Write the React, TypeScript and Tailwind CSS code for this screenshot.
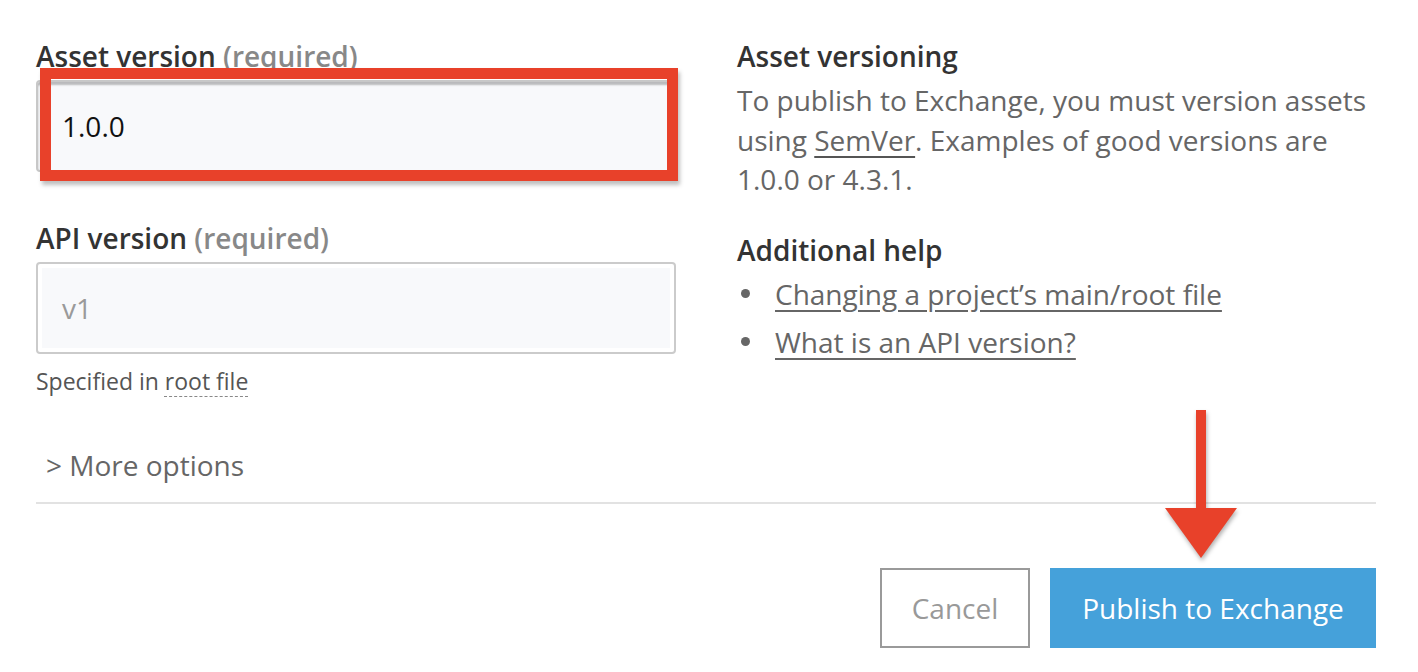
import React from "react";

export default function App() {
  return (
    <div
      className="w-[1418px] h-[672px] bg-white overflow-hidden relative"
      style={{ fontFamily: '"Open Sans", "Noto Sans", sans-serif' }}
    >
      <div className="pl-[36px] pr-[42px] pt-[38px]">
        <div className="flex">
          {/* Left column */}
          <div className="w-[640px] shrink-0">
            <div className="text-[28px] leading-[36px] font-semibold text-[#333]">
              Asset version <span className="text-[#888]">(required)</span>
            </div>
            <div className="relative mt-[6px]">
              <div className="h-[92px] rounded-[4px] border-2 border-[#c8c8c8] bg-[#f8f9fb] shadow-[inset_0_3px_2px_rgba(0,0,0,0.25)] flex items-center pl-[24px]">
                <span className="text-[28px] text-[#111]">1.0.0</span>
              </div>
              <div className="absolute left-[4px] top-[-12px] w-[638px] h-[113px] border-[11px] border-[#e8412a] shadow-[2px_4px_4px_rgba(0,0,0,0.25)]" />
            </div>

            <div className="mt-[48px] text-[28px] leading-[36px] font-semibold text-[#333]">
              API version <span className="text-[#888]">(required)</span>
            </div>
            <div className="mt-[6px] h-[92px] rounded-[4px] border-2 border-[#cbcbcb] bg-white p-[4px]">
              <div className="h-full bg-[#f8f9fb] flex items-center pl-[20px]">
                <span className="text-[28px] text-[#9a9a9a]">v1</span>
              </div>
            </div>
            <div className="mt-[12px] text-[23px] leading-[30px] text-[#555]">
              Specified in{" "}
              <span className="underline decoration-dashed decoration-[#888] underline-offset-[6px] decoration-1">
                root file
              </span>
            </div>
          </div>

          {/* Right column */}
          <div className="ml-[61px] flex-1">
            <div className="text-[28px] leading-[36px] font-semibold text-[#333]">
              Asset versioning
            </div>
            <p className="mt-[7px] text-[28px] leading-[39.5px] text-[#666]">
              To publish to Exchange, you must version assets using{" "}
              <span className="underline underline-offset-[5px] decoration-[#555]">SemVer</span>. Examples of good versions are 1.0.0 or 4.3.1.
            </p>
            <div className="mt-[32px] text-[28px] leading-[36px] font-semibold text-[#333]">
              Additional help
            </div>
            <ul className="mt-[2px] text-[28px] leading-[48px] text-[#666]">
              <li className="flex items-center">
                <span className="w-[9px] h-[9px] rounded-full bg-[#666] ml-[4px] mr-[25px]" />
                <span className="underline underline-offset-[5px] decoration-[#666]">
                  Changing a project’s main/root file
                </span>
              </li>
              <li className="flex items-center">
                <span className="w-[9px] h-[9px] rounded-full bg-[#666] ml-[4px] mr-[25px]" />
                <span className="underline underline-offset-[5px] decoration-[#666]">
                  What is an API version?
                </span>
              </li>
            </ul>
          </div>
        </div>

        <div className="mt-[49px] pl-[10px] text-[28px] leading-[40px] text-[#666]">
          &gt; More options
        </div>
        <div className="mt-[17px] h-[2px] bg-[#e2e2e2]" />

        <div className="mt-[64px] flex justify-end gap-[20px]">
          <button className="w-[150px] h-[80px] border-2 border-[#9a9a9a] bg-white text-[28px] text-[#999]">
            Cancel
          </button>
          <button className="w-[326px] h-[80px] bg-[#45a1da] text-[28px] text-white">
            Publish to Exchange
          </button>
        </div>
      </div>

      {/* Annotation arrow */}
      <svg
        className="absolute left-[1160px] top-[408px]"
        width="84"
        height="156"
        viewBox="0 0 84 156"
        style={{ filter: "drop-shadow(1px 3px 2px rgba(0,0,0,0.3))" }}
      >
        <rect x="36" y="2" width="10" height="100" fill="#e8412a" />
        <polygon points="5,100 77,100 41,150" fill="#e8412a" />
      </svg>
    </div>
  );
}
